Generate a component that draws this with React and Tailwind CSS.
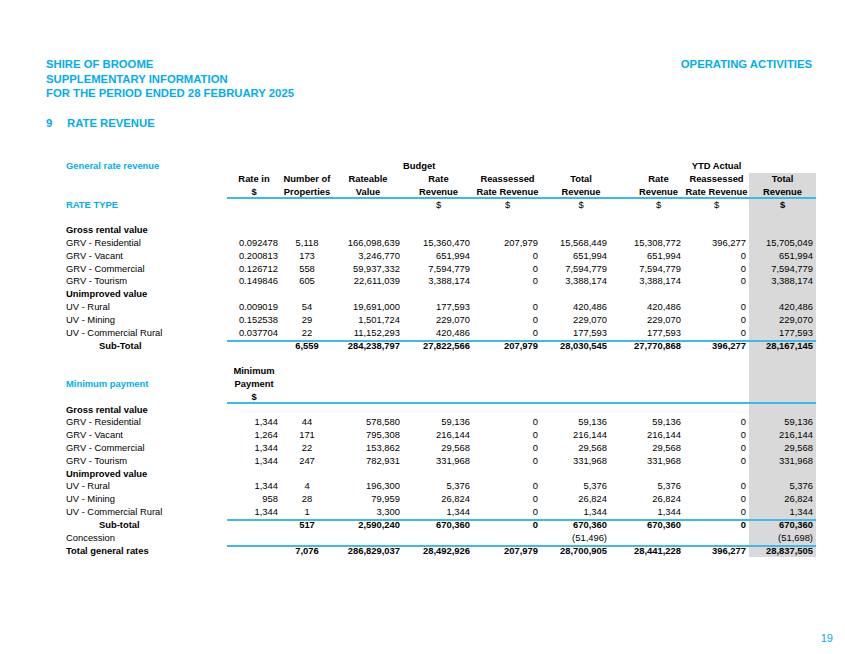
import React from 'react'
import clsx from 'clsx'

const W = ['w-[54px]', 'w-[52px]', 'w-[70px]', 'w-[71px]', 'w-[67px]', 'w-[70px]', 'w-[73px]', 'w-[65px]', 'w-[67px]']
const VAL = ['text-right pr-[3px]', 'text-center', 'text-right pr-[3px]', 'text-right pr-[4px]', 'text-right pr-[3px]', 'text-right pr-[4px]', 'text-right pr-[3px]', 'text-right pr-[3px]', 'text-right pr-[3px]']
const HEAD = ['text-center', 'text-center', 'text-center', 'text-center', 'text-center', 'text-center pl-[10px]', 'text-center pl-[22px]', 'text-center', 'text-center']

function Row({ label, labelClass, cells = [], align = VAL, bold, line, grey = true, cellClass = [] }) {
  return (
    <div className="flex h-[12.82px] leading-[12.82px]">
      <div className={clsx('w-[161px] shrink-0 whitespace-nowrap', labelClass)}>{label}</div>
      {W.map((w, i) => (
        <div
          key={i}
          className={clsx(
            w,
            'shrink-0 whitespace-nowrap',
            align[i],
            bold && 'font-bold',
            cellClass[i],
            line === 't' && 'shadow-[inset_0_2px_0_#3db9ec]',
            line === 'b' && 'shadow-[inset_0_-2px_0_#3db9ec]',
            i === 8 && grey && 'bg-[#d9d9d9]'
          )}
        >
          {cells[i]}
        </div>
      ))}
    </div>
  )
}

const general = [
  ['GRV - Residential', '0.092478', '5,118', '166,098,639', '15,360,470', '207,979', '15,568,449', '15,308,772', '396,277', '15,705,049'],
  ['GRV - Vacant', '0.200813', '173', '3,246,770', '651,994', '0', '651,994', '651,994', '0', '651,994'],
  ['GRV - Commercial', '0.126712', '558', '59,937,332', '7,594,779', '0', '7,594,779', '7,594,779', '0', '7,594,779'],
  ['GRV - Tourism', '0.149846', '605', '22,611,039', '3,388,174', '0', '3,388,174', '3,388,174', '0', '3,388,174'],
  null,
  ['UV - Rural', '0.009019', '54', '19,691,000', '177,593', '0', '420,486', '420,486', '0', '420,486'],
  ['UV - Mining', '0.152538', '29', '1,501,724', '229,070', '0', '229,070', '229,070', '0', '229,070'],
  ['UV - Commercial Rural', '0.037704', '22', '11,152,293', '420,486', '0', '177,593', '177,593', '0', '177,593'],
]

const minimum = [
  ['GRV - Residential', '1,344', '44', '578,580', '59,136', '0', '59,136', '59,136', '0', '59,136'],
  ['GRV - Vacant', '1,264', '171', '795,308', '216,144', '0', '216,144', '216,144', '0', '216,144'],
  ['GRV - Commercial', '1,344', '22', '153,862', '29,568', '0', '29,568', '29,568', '0', '29,568'],
  ['GRV - Tourism', '1,344', '247', '782,931', '331,968', '0', '331,968', '331,968', '0', '331,968'],
  null,
  ['UV - Rural', '1,344', '4', '196,300', '5,376', '0', '5,376', '5,376', '0', '5,376'],
  ['UV - Mining', '958', '28', '79,959', '26,824', '0', '26,824', '26,824', '0', '26,824'],
  ['UV - Commercial Rural', '1,344', '1', '3,300', '1,344', '0', '1,344', '1,344', '0', '1,344'],
]

function DataRows({ rows }) {
  return rows.map((r, i) =>
    r ? (
      <Row key={i} label={r[0]} cells={r.slice(1)} />
    ) : (
      <Row key={i} label="Unimproved value" labelClass="font-bold" />
    )
  )
}

export default function App() {
  const blue = 'text-[#00aeef]'
  return (
    <div className="w-[845px] h-[654px] bg-white overflow-hidden text-black font-['Liberation_Sans',Arial,sans-serif]">
      <div className={clsx('pt-[57px] text-[11.3px] leading-[14.6px] font-bold', blue)}>
        <div className="flex justify-between pl-[46px] pr-[33px]">
          <div>
            <div>SHIRE OF BROOME</div>
            <div>SUPPLEMENTARY INFORMATION</div>
            <div>FOR THE PERIOD ENDED 28 FEBRUARY 2025</div>
          </div>
          <div>OPERATING ACTIVITIES</div>
        </div>
        <div className="flex pl-[46px] mt-[15.5px]">
          <span className="w-[21px]">9</span>
          <span>RATE REVENUE</span>
        </div>
      </div>

      <div className="mt-[29.3px] pl-[66px] text-[9.4px]">
        <Row
          label="General rate revenue"
          labelClass={clsx('font-bold', blue)}
          cells={['', '', '', 'Budget', '', '', '', 'YTD Actual', '']}
          align={['', '', '', 'text-left', '', '', '', 'text-center', '']}
          bold
          grey={false}
        />
        <Row cells={['Rate in', 'Number of', 'Rateable', 'Rate', 'Reassessed', 'Total', 'Rate', 'Reassessed', 'Total']} align={HEAD} bold />
        <Row cells={['$', 'Properties', 'Value', 'Revenue', 'Rate Revenue', 'Revenue', 'Revenue', 'Rate Revenue', 'Revenue']} align={HEAD} bold line="b" />
        <Row
          label="RATE TYPE"
          labelClass={clsx('font-bold', blue)}
          cells={['', '', '', '$', '$', '$', '$', '$', '$']}
          align={HEAD}
          cellClass={['', '', '', '', '', '', '', '', 'font-bold']}
        />
        <Row />
        <Row label="Gross rental value" labelClass="font-bold" />
        <DataRows rows={general} />
        <Row
          label="Sub-Total"
          labelClass="font-bold pl-[33px]"
          cells={['', '6,559', '284,238,797', '27,822,566', '207,979', '28,030,545', '27,770,868', '396,277', '28,167,145']}
          bold
          line="t"
        />
        <Row />
        <Row cells={['Minimum']} align={HEAD} bold />
        <Row label="Minimum payment" labelClass={clsx('font-bold', blue)} cells={['Payment']} align={HEAD} bold />
        <Row cells={['$']} align={HEAD} bold line="b" />
        <Row label="Gross rental value" labelClass="font-bold" />
        <DataRows rows={minimum} />
        <Row
          label="Sub-total"
          labelClass="font-bold pl-[33px]"
          cells={['', '517', '2,590,240', '670,360', '0', '670,360', '670,360', '0', '670,360']}
          bold
          line="t"
        />
        <Row label="Concession" cells={['', '', '', '', '', '(51,496)', '', '', '(51,698)']} />
        <Row
          label="Total general rates"
          labelClass="font-bold"
          cells={['', '7,076', '286,829,037', '28,492,926', '207,979', '28,700,905', '28,441,228', '396,277', '28,837,505']}
          bold
          line="t"
        />
      </div>

      <div className={clsx('flex justify-end pr-[12px] mt-[75px] text-[11px] leading-[13px]', blue)}>19</div>
    </div>
  )
}
